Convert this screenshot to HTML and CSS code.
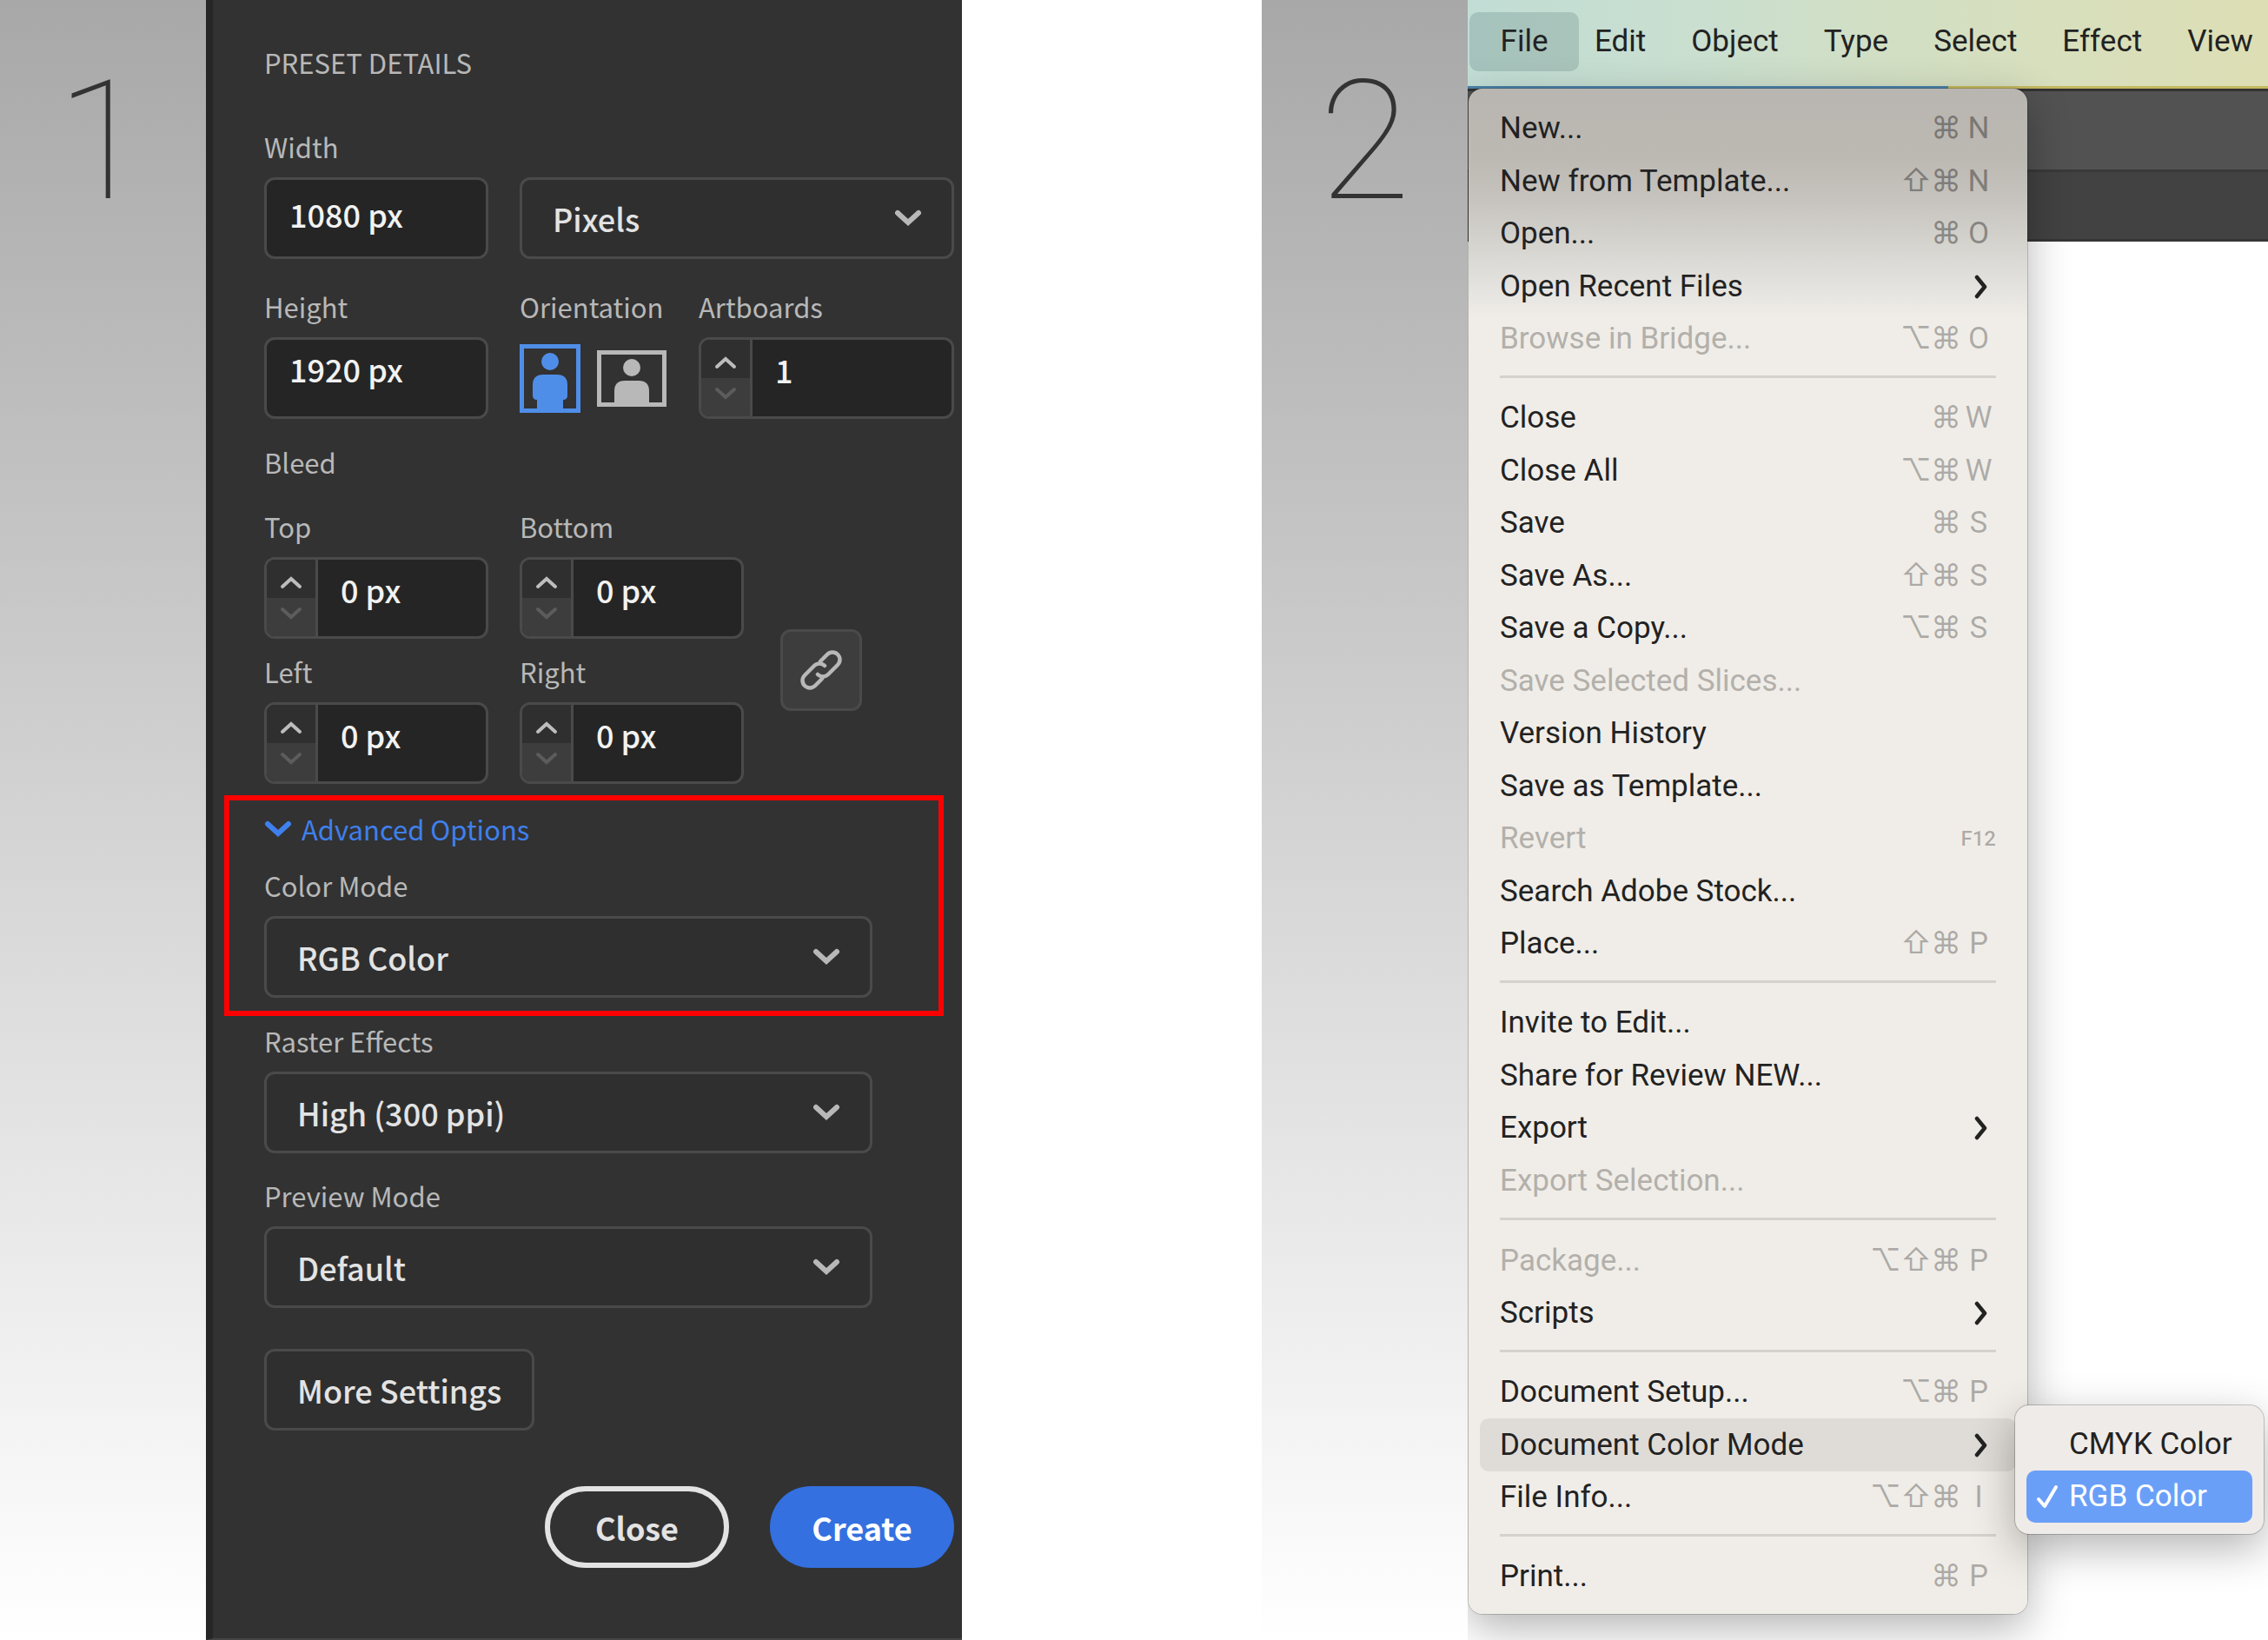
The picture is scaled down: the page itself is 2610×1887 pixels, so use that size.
FILE: index.html
```html
<!DOCTYPE html>
<html lang="en">
<head>
<meta charset="utf-8">
<title>Changing the color mode</title>
<link rel="stylesheet" href="styles.css">
</head>
<body>
<svg class="sprite">
  <symbol id="chevron-down" viewBox="0 0 32 20"><path d="M4 4l12 11 12-11" fill="none" stroke="currentColor" stroke-width="6" stroke-linecap="round"/></symbol>
  <symbol id="step-up" viewBox="0 0 26 16"><path d="M3 13l10-9 10 9" fill="none" stroke="currentColor" stroke-width="4" stroke-linecap="round"/></symbol>
  <symbol id="step-down" viewBox="0 0 26 16"><path d="M3 3l10 9 10-9" fill="none" stroke="currentColor" stroke-width="4" stroke-linecap="round"/></symbol>
  <symbol id="arrow-right" viewBox="0 0 16 28"><path d="M3 3l9 11-9 11" fill="none" stroke="currentColor" stroke-width="4.5" stroke-linecap="round" stroke-linejoin="round"/></symbol>
</svg>
<main class="steps">
  <div class="step-number">1</div>

  <form class="panel">
    <h1 class="panel-title">PRESET DETAILS</h1>

    <div class="row">
      <div class="field narrow">
        <label for="width">Width</label>
        <input class="box text" id="width" type="text" value="1080 px">
      </div>
      <div class="field grow unlabelled">
        <div class="select">
          <select class="box" aria-label="Units"><option>Pixels</option></select>
          <svg class="chevron"><use href="#chevron-down"/></svg>
        </div>
      </div>
    </div>

    <div class="row second">
      <div class="field narrow">
        <label for="height">Height</label>
        <input class="box text raised" id="height" type="text" value="1920 px">
      </div>
      <div class="field orientation">
        <span class="label">Orientation</span>
        <div class="orientation-buttons">
          <button type="button" class="icon-button portrait" aria-label="Portrait">
            <svg width="70" height="79" viewBox="0 0 70 79"><path d="M2.5 2.5h65v74h-65z" fill="none" stroke="currentColor" stroke-width="5"/><circle cx="35" cy="20" r="10" fill="currentColor"/><path d="M27 35h16q12 0 12 12v12q0 5-5 5v12H20V64q-5 0-5-5V47q0-12 12-12z" fill="currentColor"/></svg>
          </button>
          <button type="button" class="icon-button landscape" aria-label="Landscape">
            <svg width="80" height="65" viewBox="0 0 80 65"><path d="M2.5 2.5h75v60h-75z" fill="none" stroke="currentColor" stroke-width="5"/><circle cx="40" cy="20" r="10" fill="currentColor"/><path d="M32 35h16q12 0 12 12v15H20V47q0-12 12-12z" fill="currentColor"/></svg>
          </button>
        </div>
      </div>
      <div class="field grow">
        <label for="artboards">Artboards</label>
        <div class="box stepper">
          <div class="step-buttons">
            <button type="button" class="up" aria-label="Increase"><svg><use href="#step-up"/></svg></button>
            <button type="button" class="down" aria-label="Decrease"><svg><use href="#step-down"/></svg></button>
          </div>
          <input id="artboards" type="text" value="1">
        </div>
      </div>
    </div>

    <h2 class="label bleed-title">Bleed</h2>
    <div class="bleed">
      <div class="bleed-grid">
        <div class="field">
          <label for="top">Top</label>
          <div class="box stepper">
            <div class="step-buttons">
              <button type="button" class="up" aria-label="Increase"><svg><use href="#step-up"/></svg></button>
              <button type="button" class="down" aria-label="Decrease"><svg><use href="#step-down"/></svg></button>
            </div>
            <input id="top" type="text" value="0 px">
          </div>
        </div>
        <div class="field">
          <label for="bottom">Bottom</label>
          <div class="box stepper">
            <div class="step-buttons">
              <button type="button" class="up" aria-label="Increase"><svg><use href="#step-up"/></svg></button>
              <button type="button" class="down" aria-label="Decrease"><svg><use href="#step-down"/></svg></button>
            </div>
            <input id="bottom" type="text" value="0 px">
          </div>
        </div>
        <div class="field">
          <label for="left">Left</label>
          <div class="box stepper">
            <div class="step-buttons">
              <button type="button" class="up" aria-label="Increase"><svg><use href="#step-up"/></svg></button>
              <button type="button" class="down" aria-label="Decrease"><svg><use href="#step-down"/></svg></button>
            </div>
            <input id="left" type="text" value="0 px">
          </div>
        </div>
        <div class="field">
          <label for="right">Right</label>
          <div class="box stepper">
            <div class="step-buttons">
              <button type="button" class="up" aria-label="Increase"><svg><use href="#step-up"/></svg></button>
              <button type="button" class="down" aria-label="Decrease"><svg><use href="#step-down"/></svg></button>
            </div>
            <input id="right" type="text" value="0 px">
          </div>
        </div>
      </div>
      <button type="button" class="box link-button" aria-label="Link bleed values">
        <svg width="48" height="48" viewBox="0 0 48 48" fill="none" stroke="currentColor" stroke-width="4.5" stroke-linecap="round" stroke-linejoin="round"><path d="M23 14l8-8a8.500 8.500 0 0 1 12 0a8.500 8.500 0 0 1 0 12L32 29a8.500 8.500 0 0 1-12 0"/><path d="M25 34l-8 8a8.500 8.500 0 0 1-12 0a8.500 8.500 0 0 1 0-12L16 19a8.500 8.500 0 0 1 12 0"/></svg>
      </button>
    </div>

    <div class="highlight">
      <button type="button" class="advanced"><svg class="chevron"><use href="#chevron-down"/></svg>Advanced Options</button>
      <div class="field">
        <label for="color-mode">Color Mode</label>
        <div class="select">
          <select class="box" id="color-mode"><option>RGB Color</option></select>
          <svg class="chevron"><use href="#chevron-down"/></svg>
        </div>
      </div>
    </div>

    <div class="field wide raster">
      <label for="raster">Raster Effects</label>
      <div class="select">
        <select class="box" id="raster"><option>High (300 ppi)</option></select>
        <svg class="chevron"><use href="#chevron-down"/></svg>
      </div>
    </div>
    <div class="field wide preview">
      <label for="preview">Preview Mode</label>
      <div class="select">
        <select class="box" id="preview"><option>Default</option></select>
        <svg class="chevron"><use href="#chevron-down"/></svg>
      </div>
    </div>

    <button type="button" class="box more">More Settings</button>
    <div class="actions">
      <button type="button" class="pill close">Close</button>
      <button type="submit" class="pill create">Create</button>
    </div>
  </form>

  <div class="step-number second-step">2</div>

  <section class="app">
    <nav class="menubar">
      <button class="open">File</button>
      <button>Edit</button>
      <button>Object</button>
      <button>Type</button>
      <button>Select</button>
      <button>Effect</button>
      <button>View</button>
    </nav>
    <div class="toolbar"></div>
    <div class="tabs"></div>

    <ul class="menu">
      <li class="shaded"><button>New...</button><kbd><span>⌘</span><span>N</span></kbd></li>
      <li class="shaded"><button>New from Template...</button><kbd><span>⇧</span><span>⌘</span><span>N</span></kbd></li>
      <li class="shaded"><button>Open...</button><kbd><span>⌘</span><span>O</span></kbd></li>
      <li><button>Open Recent Files</button><svg class="arrow"><use href="#arrow-right"/></svg></li>
      <li><button disabled>Browse in Bridge...</button><kbd><span>⌥</span><span>⌘</span><span>O</span></kbd></li>
      <li class="separator"></li>
      <li><button>Close</button><kbd><span>⌘</span><span>W</span></kbd></li>
      <li><button>Close All</button><kbd><span>⌥</span><span>⌘</span><span>W</span></kbd></li>
      <li><button>Save</button><kbd><span>⌘</span><span>S</span></kbd></li>
      <li><button>Save As...</button><kbd><span>⇧</span><span>⌘</span><span>S</span></kbd></li>
      <li><button>Save a Copy...</button><kbd><span>⌥</span><span>⌘</span><span>S</span></kbd></li>
      <li><button disabled>Save Selected Slices...</button></li>
      <li><button>Version History</button></li>
      <li><button>Save as Template...</button></li>
      <li><button disabled>Revert</button><kbd class="function-key">F12</kbd></li>
      <li><button>Search Adobe Stock...</button></li>
      <li><button>Place...</button><kbd><span>⇧</span><span>⌘</span><span>P</span></kbd></li>
      <li class="separator"></li>
      <li><button>Invite to Edit...</button></li>
      <li><button>Share for Review NEW...</button></li>
      <li><button>Export</button><svg class="arrow"><use href="#arrow-right"/></svg></li>
      <li><button disabled>Export Selection...</button></li>
      <li class="separator"></li>
      <li><button disabled>Package...</button><kbd><span>⌥</span><span>⇧</span><span>⌘</span><span>P</span></kbd></li>
      <li><button>Scripts</button><svg class="arrow"><use href="#arrow-right"/></svg></li>
      <li class="separator"></li>
      <li><button>Document Setup...</button><kbd><span>⌥</span><span>⌘</span><span>P</span></kbd></li>
      <li class="current"><button>Document Color Mode</button><svg class="arrow"><use href="#arrow-right"/></svg>
        <ul class="submenu">
          <li><button>CMYK Color</button></li>
          <li class="checked"><svg class="check" viewBox="0 0 26 28"><path d="M3 17l7 8L23 3" fill="none" stroke="currentColor" stroke-width="4" stroke-linecap="round" stroke-linejoin="round"/></svg><button>RGB Color</button></li>
        </ul>
      </li>
      <li><button>File Info...</button><kbd><span>⌥</span><span>⇧</span><span>⌘</span><span>I</span></kbd></li>
      <li class="separator"></li>
      <li><button>Print...</button><kbd><span>⌘</span><span>P</span></kbd></li>
    </ul>
  </section>
</main>
</body>
</html>
```
FILE: styles.css
```css
*, *::before, *::after { box-sizing: border-box; }

body { margin: 0; background: #fff; }

button, input, select {
  margin: 0;
  padding: 0;
  border: 0;
  background: none;
  color: inherit;
  font: inherit;
  outline: none;
}

h1, h2, ul { margin: 0; padding: 0; font: inherit; list-style: none; }

.sprite { position: absolute; width: 0; height: 0; }

.steps {
  display: grid;
  grid-template-columns: 237fr 870fr 345fr 237fr 921fr;
  min-height: 100vh;
}

.step-number {
  padding: 51px 2px 0 0;
  background: linear-gradient(#a8a8a8, #fff);
  color: #333;
  font: 100 192px/224px Roboto, sans-serif;
  text-align: center;
}
.second-step { grid-column: 4; padding-right: 0; }

/* New document panel */
.panel {
  min-width: 0;
  padding: 52px 9px 71px 59px;
  border-left: 8px solid #262626;
  border-bottom: 2px solid #444;
  background: #323232;
  color: #b8b8b8;
  font: 400 31px/40px "Noto Sans CJK SC", sans-serif;
}
.row { display: flex; gap: 36px; margin-top: 57px; }
.row.second { margin-top: 35px; }

.field { display: flex; flex-direction: column; gap: 15px; }
.field.narrow { width: 258px; flex: none; }
.field.grow { flex: 1; min-width: 0; }
.field.wide { width: 700px; }
.field.unlabelled { justify-content: flex-end; }
.orientation { width: 170px; }
.label, .field label { display: block; white-space: nowrap; }

.box {
  height: 94px;
  border: 3px solid #4a4a4a;
  border-radius: 12px;
  background: #2f2f2f;
  color: #e3e3e3;
  font-size: 36px;
  font-weight: 500;
  line-height: 56px;
}
.box.text { width: 100%; padding: 0 20px 10px 26px; background: #252525; color: #f2f2f2; }
.box.raised { padding-bottom: 22px; }

.select { display: grid; align-items: center; }
.select > * { grid-area: 1 / 1; }
.select select { width: 100%; padding: 0 80px 0 35px; appearance: none; }
.chevron { width: 32px; height: 20px; color: #b8b8b8; }
.select .chevron { justify-self: end; margin-right: 37px; pointer-events: none; }

.orientation-buttons { display: flex; align-items: center; gap: 19px; height: 94px; }
.icon-button { display: flex; }
.portrait { color: #4f8ee8; }
.landscape { color: #b8b8b8; }

.stepper { display: flex; overflow: hidden; background: #252525; }
.step-buttons { display: flex; flex-direction: column; width: 59px; border-right: 3px solid #4a4a4a; }
.step-buttons button { display: flex; flex: 1; align-items: center; justify-content: center; }
.step-buttons svg { width: 26px; height: 16px; }
.step-buttons .up { padding-top: 8px; background: #2f2f2f; color: #bdbdbd; }
.step-buttons .down { padding-bottom: 8px; background: #3d3d3d; color: #5c5c5c; }
.stepper input { flex: 1; min-width: 0; padding: 0 8px 20px 26px; color: #f2f2f2; }

.bleed-title { margin-top: 30px; }
.bleed { display: flex; align-items: center; gap: 42px; margin-top: 34px; }
.bleed-grid { display: grid; grid-template-columns: 258px 258px; gap: 18px 36px; }
.link-button { display: flex; align-items: center; justify-content: center; width: 94px; margin-top: 54px; background: #3d3d3d; color: #b8b8b8; }

.highlight {
  margin: 13px 12px 0 -46px;
  padding: 13px 0 15px 40px;
  border: 6px solid #f00;
}
.advanced { display: flex; align-items: center; gap: 11px; color: #3f80ec; }
.advanced .chevron { color: inherit; }
.highlight .field { width: 700px; margin-top: 25px; }
.raster { margin-top: 9px; }
.preview { margin-top: 29px; }

.more { margin-top: 47px; padding: 0 35px; }
.actions { display: flex; justify-content: flex-end; gap: 47px; margin-top: 64px; }
.pill { width: 212px; height: 94px; border-radius: 47px; font-size: 36px; font-weight: 700; }
.close { border: 6px solid #e3e3e3; color: #e3e3e3; }
.create { background: #3470e0; color: #fff; }

/* Application window with the File menu open */
.app {
  position: relative;
  grid-column: 5;
  min-width: 0;
  overflow: hidden;
  background: #fff;
  color: #222;
  font: 35px/60px Roboto, Inter, sans-serif;
}
.menubar {
  display: flex;
  align-items: center;
  height: 102px;
  padding: 0 2px 3px;
  border-bottom: 3px solid;
  border-image: linear-gradient(90deg, #4c82a8 60%, #c4b860 60%) 1;
  background: linear-gradient(90deg, #c1ddd5, #cadfcf 30%, #d2dfc4 52%, #d8dfbc 75%, #dddeb4);
}
.menubar button { flex: none; height: 68px; padding: 0 26px; white-space: nowrap; }
.menubar .open { width: 126px; margin-right: -8px; border-radius: 10px; background: rgba(0, 40, 40, .14); }
.toolbar { height: 96px; border-top: 3px solid #333; border-bottom: 3px solid #393939; background: #525252; }
.tabs { height: 80px; border-bottom: 3px solid #363636; background: #424242; }

.menu {
  position: absolute;
  top: 102px;
  left: 1px;
  width: 643px;
  padding: 16px 13px 13px;
  border-radius: 16px;
  background: linear-gradient(#b9b5b0, #bcb9b3 80px, #c7c4bf 130px, #d6d4cf 180px, #e5e3df 230px, #f0ede8 265px);
  box-shadow: 0 0 0 1px rgba(0, 0, 0, .18), 0 16px 50px rgba(0, 0, 0, .3);
}
.menu li { position: relative; display: flex; align-items: center; justify-content: space-between; height: 60px; padding: 0 23px; white-space: nowrap; }
.menu li:nth-child(even) { height: 61px; }
.menu li.separator { height: 31px; padding-bottom: 4px; }
.separator::before { content: ""; flex: 1; height: 3px; background: #d5d2cd; }
.menu button:disabled { color: #b3b0ab; }
.menu li.current { border-radius: 10px; background: #dfdcd7; }

kbd { display: flex; color: rgba(0, 0, 0, .28); font: inherit; }
.shaded kbd { color: rgba(0, 0, 0, .36); }
kbd span { width: 35px; text-align: center; }
kbd span:last-child { width: 40px; }
kbd.function-key { font-size: 24px; font-weight: 500; }
.arrow { width: 16px; height: 28px; margin-right: 9px; }

.menu .submenu {
  position: absolute;
  z-index: 1;
  top: -15px;
  left: 616px;
  width: 286px;
  padding: 15px 13px 13px;
  border-radius: 16px;
  background: #efebe8;
  box-shadow: 0 0 0 1px rgba(0, 0, 0, .2), 0 16px 50px rgba(0, 0, 0, .3);
}
.menu .submenu li { height: 60px; padding: 0 0 0 49px; border-radius: 10px; }
.menu .submenu .checked { gap: 12px; justify-content: flex-start; padding-left: 11px; background: #6a9ff8; color: #fff; }
.check { width: 26px; height: 28px; }
```
